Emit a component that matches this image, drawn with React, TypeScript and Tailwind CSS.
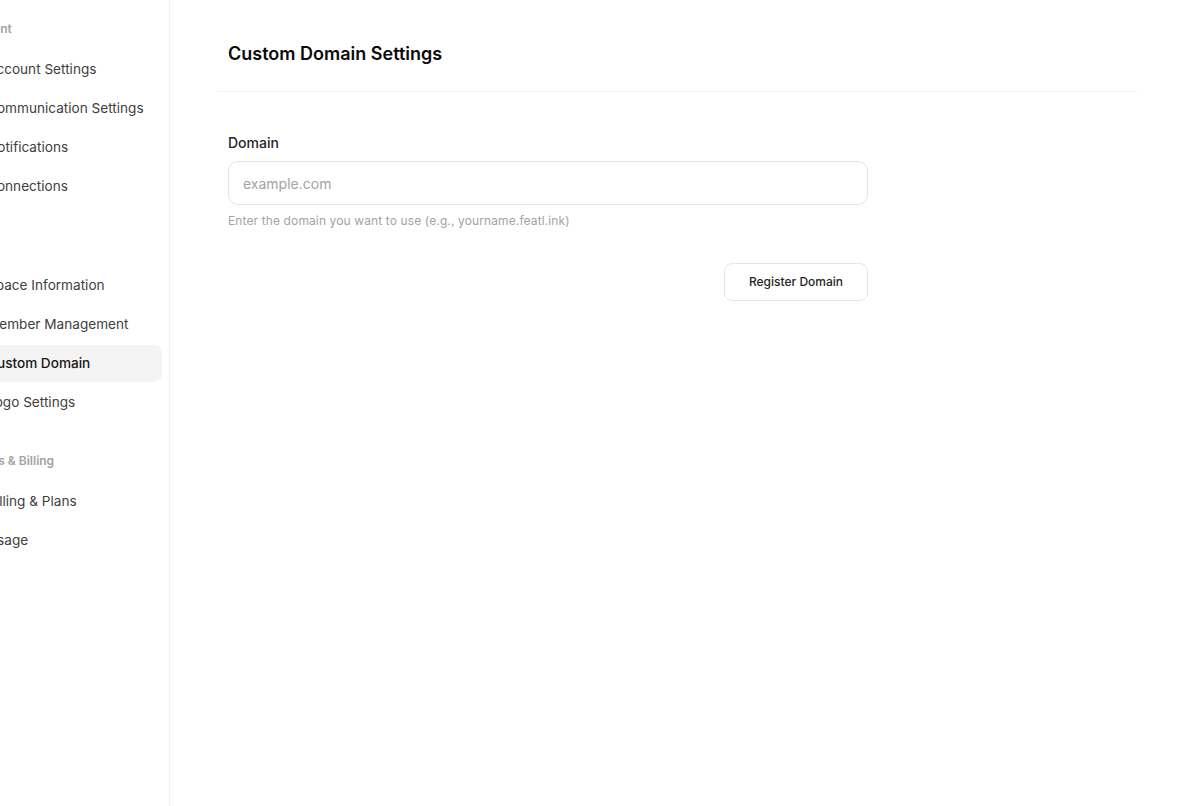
import { User, MessageSquare, Bell, Link2, Info, Users, Globe, Image, CreditCard, BarChart3 } from "lucide-react";

const sections = [
  {
    label: "Account",
    items: [
      { name: "Account Settings", icon: User },
      { name: "Communication Settings", icon: MessageSquare },
      { name: "Notifications", icon: Bell },
      { name: "Connections", icon: Link2 },
    ],
  },
  {
    label: "Space",
    items: [
      { name: "Space Information", icon: Info },
      { name: "Member Management", icon: Users },
      { name: "Custom Domain", icon: Globe },
      { name: "Logo Settings", icon: Image },
    ],
  },
  {
    label: "Credits & Billing",
    items: [
      { name: "Billing & Plans", icon: CreditCard },
      { name: "Usage", icon: BarChart3 },
    ],
  },
];

export default function App() {
  const active = "Custom Domain";

  return (
    <div
      className="flex h-[806px] w-full bg-white text-[#171717]"
      style={{ fontFamily: "Inter, 'Noto Sans', sans-serif" }}
    >
      {/* Sidebar (scrolled off the left edge) */}
      <aside className="w-[170px] shrink-0 overflow-hidden border-r border-[#f0f0f0]">
        <nav className="-ml-[57px] w-[227px] px-2 pt-[21px]">
          {sections.map((s, i) => (
            <div key={s.label} className={i > 0 ? "mt-8" : ""}>
              <p className="h-4 px-3 text-xs font-semibold leading-4 text-[#a3a3a3] whitespace-nowrap">
                {s.label}
              </p>
              <ul className="mt-3.5 flex flex-col gap-0.5">
                {s.items.map((item) => {
                  const Icon = item.icon;
                  const isActive = item.name === active;
                  return (
                    <li
                      key={item.name}
                      className={`flex h-[37px] items-center gap-2 rounded-lg px-3 text-[13.6px] whitespace-nowrap ${
                        isActive ? "bg-[#f4f4f4] font-medium text-[#171717]" : "text-[#404040]"
                      }`}
                    >
                      <Icon className="h-4 w-4 shrink-0" strokeWidth={1.75} />
                      <span>{item.name}</span>
                    </li>
                  );
                })}
              </ul>
            </div>
          ))}
        </nav>
      </aside>

      {/* Main */}
      <main className="flex-1">
        <div className="mx-auto max-w-[920px]">
          <div className="border-b border-[#f2f2f2] px-[11px] pt-10 pb-[23px]">
            <h1 className="text-lg leading-7 font-semibold text-[#0a0a0a]">
              Custom Domain Settings
            </h1>
          </div>

          <div className="px-[11px] pt-[41px]">
            <div className="w-[640px]">
              <label className="mb-2 block text-sm leading-5 font-medium text-[#262626]">
                Domain
              </label>
              <input
                type="text"
                placeholder="example.com"
                className="h-11 w-full rounded-[10px] border border-[#e5e5e5] px-[14px] text-sm text-[#171717] placeholder:text-[#a3a3a3] outline-none"
              />
              <p className="mt-2 text-xs leading-4 tracking-[0.01em] text-[#a3a3a3]">
                Enter the domain you want to use (e.g., yourname.featl.ink)
              </p>
              <div className="mt-[34px] flex justify-end">
                <button className="h-[38px] rounded-lg border border-[#e5e5e5] bg-white px-6 text-xs font-medium text-[#262626]">
                  Register Domain
                </button>
              </div>
            </div>
          </div>
        </div>
      </main>
    </div>
  );
}
